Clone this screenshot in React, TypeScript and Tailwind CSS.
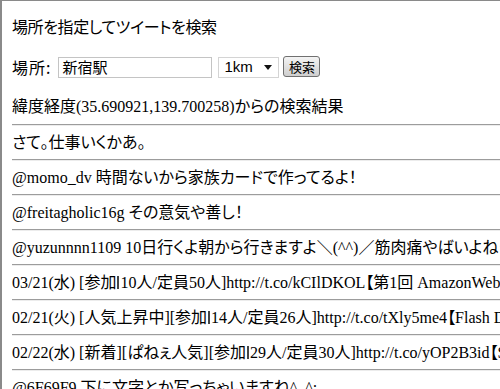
import React from "react";

const rows: React.ReactNode[] = [
  <>さて。仕事いくかあ。</>,
  <>@momo_dv 時間ないから家族カードで作ってるよ！</>,
  <>@freitagholic16g その意気や善し！</>,
  <>@yuzunnnn1109 10日行くよ朝から行きますよ＼(^^)／筋肉痛やばいよねきっと</>,
  <>
    03/21(水) [参加<Tofu />10人/定員50人]http://t.co/kCIlDKOL【第1回 AmazonWebServices勉強会】
  </>,
  <>
    02/21(火) [人気上昇中][参加<Tofu />14人/定員26人]http://t.co/tXly5me4【Flash Developers Japan】
  </>,
  <>
    02/22(水) [新着][ぱねぇ人気][参加<Tofu />29人/定員30人]http://t.co/yOP2B3id【Shibuya.js】
  </>,
  <>@6F69F9 下に文字とか写っちゃいますね^_^;</>,
];

function Tofu() {
  return (
    <span className="inline-block w-[4px] h-[13px] border border-[#444] align-[-1px] mx-[1px]" />
  );
}

function Hr() {
  return <div className="h-[2px] border-t border-[#9c9c9c] border-b border-b-[#ececec]" />;
}

export default function App() {
  return (
    <div
      className="w-[500px] h-[389px] overflow-hidden bg-white border-t border-l-2 border-[#8a8a8a] text-[16px] text-black [font-feature-settings:'palt'] whitespace-nowrap"
      style={{ fontFamily: '"Liberation Serif", "Noto Sans CJK JP", serif' }}
    >
      <div className="pl-[10px]">
        <div className="pt-[14px] h-[36px] leading-[22px] tracking-[-0.4px]" style={{ fontFamily: '"Noto Sans CJK JP", sans-serif' }}>
          場所を指定してツイートを検索
        </div>
        <div className="mt-[19px] h-[22px] flex items-center">
          <span className="leading-[22px] tracking-[1px]" style={{ fontFamily: '"Noto Sans CJK JP", sans-serif' }}>
            場所:
          </span>
          <div className="ml-[7px] w-[154px] h-[21px] border border-[#c4c4c4] flex items-center pl-[3px] text-[15px]" style={{ fontFamily: '"Noto Sans CJK JP", sans-serif' }}>
            新宿駅
          </div>
          <div className="ml-[6px] w-[61px] h-[21px] border border-[#d4d4d4] flex items-center justify-between pl-[5px] pr-[6px] text-[15px]" style={{ fontFamily: '"Liberation Sans", sans-serif' }}>
            <span>1km</span>
            <svg width="8" height="5" viewBox="0 0 8 5">
              <path d="M0 0 H8 L4 5 Z" fill="#111" />
            </svg>
          </div>
          <div className="ml-[4px] -mt-[1px] w-[37px] h-[21px] border border-[#707070] rounded-[3px] bg-gradient-to-b from-[#f4f4f4] to-[#cfcfcf] flex items-center justify-center text-[13px]" style={{ fontFamily: '"Noto Sans CJK JP", sans-serif' }}>
            検索
          </div>
        </div>
        <div className="mt-[18px] h-[22px] leading-[22px]">
          緯度経度(35.690921,139.700258)からの検索結果
        </div>
        <div className="mt-[6px]">
          <Hr />
          {rows.map((r, i) => (
            <div key={i}>
              <div className="h-[33px] flex items-center">{r}</div>
              <Hr />
            </div>
          ))}
        </div>
      </div>
    </div>
  );
}
